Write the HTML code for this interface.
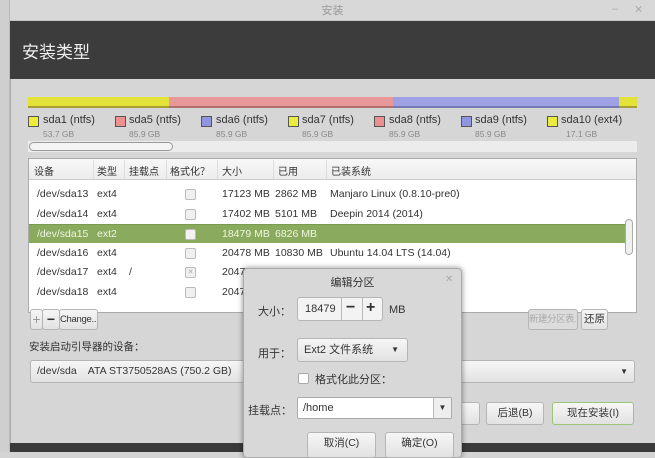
<!DOCTYPE html>
<html><head><meta charset="utf-8"><style>
*{box-sizing:border-box;margin:0;padding:0}
body{width:655px;height:452px;overflow:hidden;background:#d4d4d4;font-family:"Liberation Sans","Noto Sans CJK SC",sans-serif;font-size:11px;color:#333;position:relative;white-space:nowrap}
.a{position:absolute}
.btn{position:absolute;border:1px solid #b5b5b5;border-radius:3px;background:linear-gradient(#f6f6f6,#e2e2e2);text-align:center;color:#333;white-space:nowrap;overflow:hidden}
.sq{position:absolute;width:11px;height:11px;border:1px solid #555;top:116px}
.lg{position:absolute;top:114px;font-size:11px;color:#333}
.sz{position:absolute;top:129px;font-size:8.5px;color:#888}
.row{position:absolute;left:29px;width:596px;height:19px;line-height:19px;font-size:10.5px}
.row span{position:absolute}
.cb{position:absolute;left:156px;top:4px;width:11px;height:11px;border:1px solid #bbb;border-radius:2px;background:#f0f0f0}
.hd{position:absolute;top:163px;font-size:10px}
.sep{position:absolute;top:160px;width:1px;height:19px;background:#ddd}
</style></head><body>
<div class="a" style="left:0;top:0;width:10px;height:452px;background:#cfcfcf;border-right:1px solid #bbb"></div>
<div class="a" style="left:10px;top:0;width:645px;height:452px;background:#d6d6d6;border-left:1px solid #aaa"></div>
<div class="a" style="left:10px;top:0;width:645px;height:21px;background:#d8d8d8;border-bottom:1px solid #c4c4c4;text-align:center;line-height:22px;color:#999;font-size:11px">安装</div>
<div class="a" style="left:612px;top:3px;color:#aaa;font-size:11px">–</div>
<div class="a" style="left:634px;top:3px;color:#aaa;font-size:11px">✕</div>
<div class="a" style="left:10px;top:21px;width:645px;height:58px;background:#3c3c3c"></div>
<div class="a" style="left:22px;top:38px;color:#eee;font-size:17px">安装类型</div>
<div class="a" style="left:10px;top:443px;width:645px;height:9px;background:#3a3a3a"></div>

<div class="a" style="left:28px;top:97px;width:141px;height:11px;background:#e3e33a;border-bottom:2px solid #a8a030"></div>
<div class="a" style="left:169px;top:97px;width:224px;height:11px;background:#e89898;border-bottom:2px solid #b07070"></div>
<div class="a" style="left:393px;top:97px;width:226px;height:11px;background:#9ea2e4;border-bottom:2px solid #7478b0"></div>
<div class="a" style="left:619px;top:97px;width:18px;height:11px;background:#e3e33a;border-bottom:2px solid #a8a030"></div>

<div class="sq" style="left:28px;background:#ecec3c"></div><div class="lg" style="left:43px">sda1 (ntfs)</div><div class="sz" style="left:43px">53.7 GB</div>
<div class="sq" style="left:115px;background:#ec9090"></div><div class="lg" style="left:129px">sda5 (ntfs)</div><div class="sz" style="left:129px">85.9 GB</div>
<div class="sq" style="left:201px;background:#9095e0"></div><div class="lg" style="left:216px">sda6 (ntfs)</div><div class="sz" style="left:216px">85.9 GB</div>
<div class="sq" style="left:288px;background:#ecec3c"></div><div class="lg" style="left:302px">sda7 (ntfs)</div><div class="sz" style="left:302px">85.9 GB</div>
<div class="sq" style="left:374px;background:#ec9090"></div><div class="lg" style="left:389px">sda8 (ntfs)</div><div class="sz" style="left:389px">85.9 GB</div>
<div class="sq" style="left:461px;background:#9095e0"></div><div class="lg" style="left:475px">sda9 (ntfs)</div><div class="sz" style="left:475px">85.9 GB</div>
<div class="sq" style="left:547px;background:#ecec3c"></div><div class="lg" style="left:561px">sda10 (ext4)</div><div class="sz" style="left:566px">17.1 GB</div>

<div class="a" style="left:28px;top:141px;width:609px;height:11px;background:#ececec"></div>
<div class="a" style="left:29px;top:142px;width:144px;height:9px;border:1px solid #999;border-radius:5px;background:#f4f4f4"></div>

<div class="a" style="left:28px;top:158px;width:609px;height:155px;background:#fff;border:1px solid #aaa"></div>
<div class="a" style="left:29px;top:159px;width:607px;height:21px;background:linear-gradient(#f8f8f8,#ececec);border-bottom:1px solid #ccc"></div>
<div class="hd" style="left:34px">设备</div><div class="hd" style="left:97px">类型</div><div class="hd" style="left:129px">挂载点</div><div class="hd" style="left:170px">格式化？</div><div class="hd" style="left:222px">大小</div><div class="hd" style="left:278px">已用</div><div class="hd" style="left:331px">已装系统</div>
<div class="sep" style="left:93px"></div><div class="sep" style="left:124px"></div><div class="sep" style="left:166px"></div><div class="sep" style="left:217px"></div><div class="sep" style="left:273px"></div><div class="sep" style="left:326px"></div>

<div class="row" style="top:185px"><span style="left:8px">/dev/sda13</span><span style="left:68px">ext4</span><div class="cb"></div><span style="left:193px">17123 MB</span><span style="left:246px">2862 MB</span><span style="left:301px">Manjaro Linux (0.8.10-pre0)</span></div>
<div class="row" style="top:205px"><span style="left:8px">/dev/sda14</span><span style="left:68px">ext4</span><div class="cb"></div><span style="left:193px">17402 MB</span><span style="left:246px">5101 MB</span><span style="left:301px">Deepin 2014 (2014)</span></div>
<div class="row" style="top:224px;background:#8aab5e;color:#eef5e4;border-top:1px solid #7a9a50"><span style="left:8px">/dev/sda15</span><span style="left:68px">ext2</span><div class="cb" style="background:#f2f2f2"></div><span style="left:193px">18479 MB</span><span style="left:246px">6826 MB</span></div>
<div class="row" style="top:244px"><span style="left:8px">/dev/sda16</span><span style="left:68px">ext4</span><div class="cb"></div><span style="left:193px">20478 MB</span><span style="left:246px">10830 MB</span><span style="left:301px">Ubuntu 14.04 LTS (14.04)</span></div>
<div class="row" style="top:263px"><span style="left:8px">/dev/sda17</span><span style="left:68px">ext4</span><span style="left:100px">/</span><div class="cb" style="font-size:7px;line-height:9px;text-align:center;color:#aaa">✕</div><span style="left:193px">2047</span></div>
<div class="row" style="top:283px"><span style="left:8px">/dev/sda18</span><span style="left:68px">ext4</span><div class="cb"></div><span style="left:193px">2047</span></div>
<div class="a" style="left:625px;top:219px;width:8px;height:36px;border:1px solid #aaa;border-radius:4px;background:#f0f0f0"></div>

<div class="btn" style="left:30px;top:309px;width:13px;height:21px;color:#999;font-size:14px;line-height:18px">+</div>
<div class="btn" style="left:42px;top:309px;width:18px;height:21px;font-size:14px;font-weight:bold;line-height:18px">−</div>
<div class="btn" style="left:59px;top:309px;width:39px;height:21px;font-size:9.5px;line-height:19px;letter-spacing:-0.3px">Change...</div>
<div class="btn" style="left:528px;top:309px;width:50px;height:21px;font-size:9.5px;line-height:19px;color:#aaa;background:#dcdcdc;letter-spacing:-0.5px">新建分区表...</div>
<div class="btn" style="left:581px;top:309px;width:27px;height:21px;font-size:10.5px;line-height:19px">还原</div>
<div class="a" style="left:29px;top:339px;font-size:10.5px">安装启动引导器的设备：</div>
<div class="btn" style="left:30px;top:360px;width:605px;height:23px;text-align:left;font-size:10.5px;line-height:21px;padding-left:6px">/dev/sda &nbsp;&nbsp; ATA ST3750528AS (750.2 GB)<span style="position:absolute;right:6px;font-size:8px">▼</span></div>
<div class="btn" style="left:440px;top:402px;width:40px;height:23px"></div>
<div class="btn" style="left:486px;top:402px;width:58px;height:23px;font-size:10.5px;line-height:21px">后退(B)</div>
<div class="btn" style="left:552px;top:402px;width:82px;height:23px;font-size:10.5px;line-height:21px;border-color:#9cc47a">现在安装(I)</div>

<div class="a" style="left:243px;top:268px;width:219px;height:190px;background:#d8d8d8;border:1px solid #aaa;border-radius:4px;box-shadow:0 0 6px rgba(0,0,0,.45)"></div>
<div class="a" style="left:243px;top:274px;width:219px;text-align:center;font-size:11px">编辑分区</div>
<div class="a" style="left:445px;top:274px;color:#aaa;font-size:10px">✕</div>
<div class="a" style="left:258px;top:303px;font-size:11px">大小：</div>
<div class="btn" style="left:297px;top:297px;width:86px;height:24px;background:#f3f3f3"></div>
<div class="a" style="left:305px;top:303px;font-size:11px">18479</div>
<div class="a" style="left:341px;top:298px;width:1px;height:22px;background:#bbb"></div>
<div class="a" style="left:362px;top:298px;width:1px;height:22px;background:#bbb"></div>
<div class="a" style="left:346px;top:299px;font-size:16px;font-weight:bold">−</div>
<div class="a" style="left:366px;top:299px;font-size:16px;font-weight:bold">+</div>
<div class="a" style="left:389px;top:304px;font-size:11px">MB</div>
<div class="a" style="left:258px;top:345px;font-size:11px">用于：</div>
<div class="btn" style="left:297px;top:338px;width:111px;height:24px;text-align:left;padding-left:6px;line-height:22px;font-size:11px">Ext2 文件系统<span style="position:absolute;right:8px;font-size:8px">▼</span></div>
<div class="a" style="left:298px;top:373px;width:11px;height:11px;border:1px solid #aaa;border-radius:2px;background:#fff"></div>
<div class="a" style="left:315px;top:371px;font-size:11px">格式化此分区：</div>
<div class="a" style="left:248px;top:402px;font-size:11px">挂载点：</div>
<div class="a" style="left:297px;top:397px;width:155px;height:22px;border:1px solid #aaa;border-radius:2px;background:#fff;padding-left:5px;line-height:20px;font-size:11px">/home<div style="position:absolute;right:0;top:0;width:18px;height:20px;border-left:1px solid #bbb;background:#eee;text-align:center;font-size:8px">▼</div></div>
<div class="btn" style="left:307px;top:432px;width:69px;height:26px;font-size:10.5px;line-height:20px">取消(C)</div>
<div class="btn" style="left:385px;top:432px;width:69px;height:26px;font-size:10.5px;line-height:20px">确定(O)</div>
</body></html>
